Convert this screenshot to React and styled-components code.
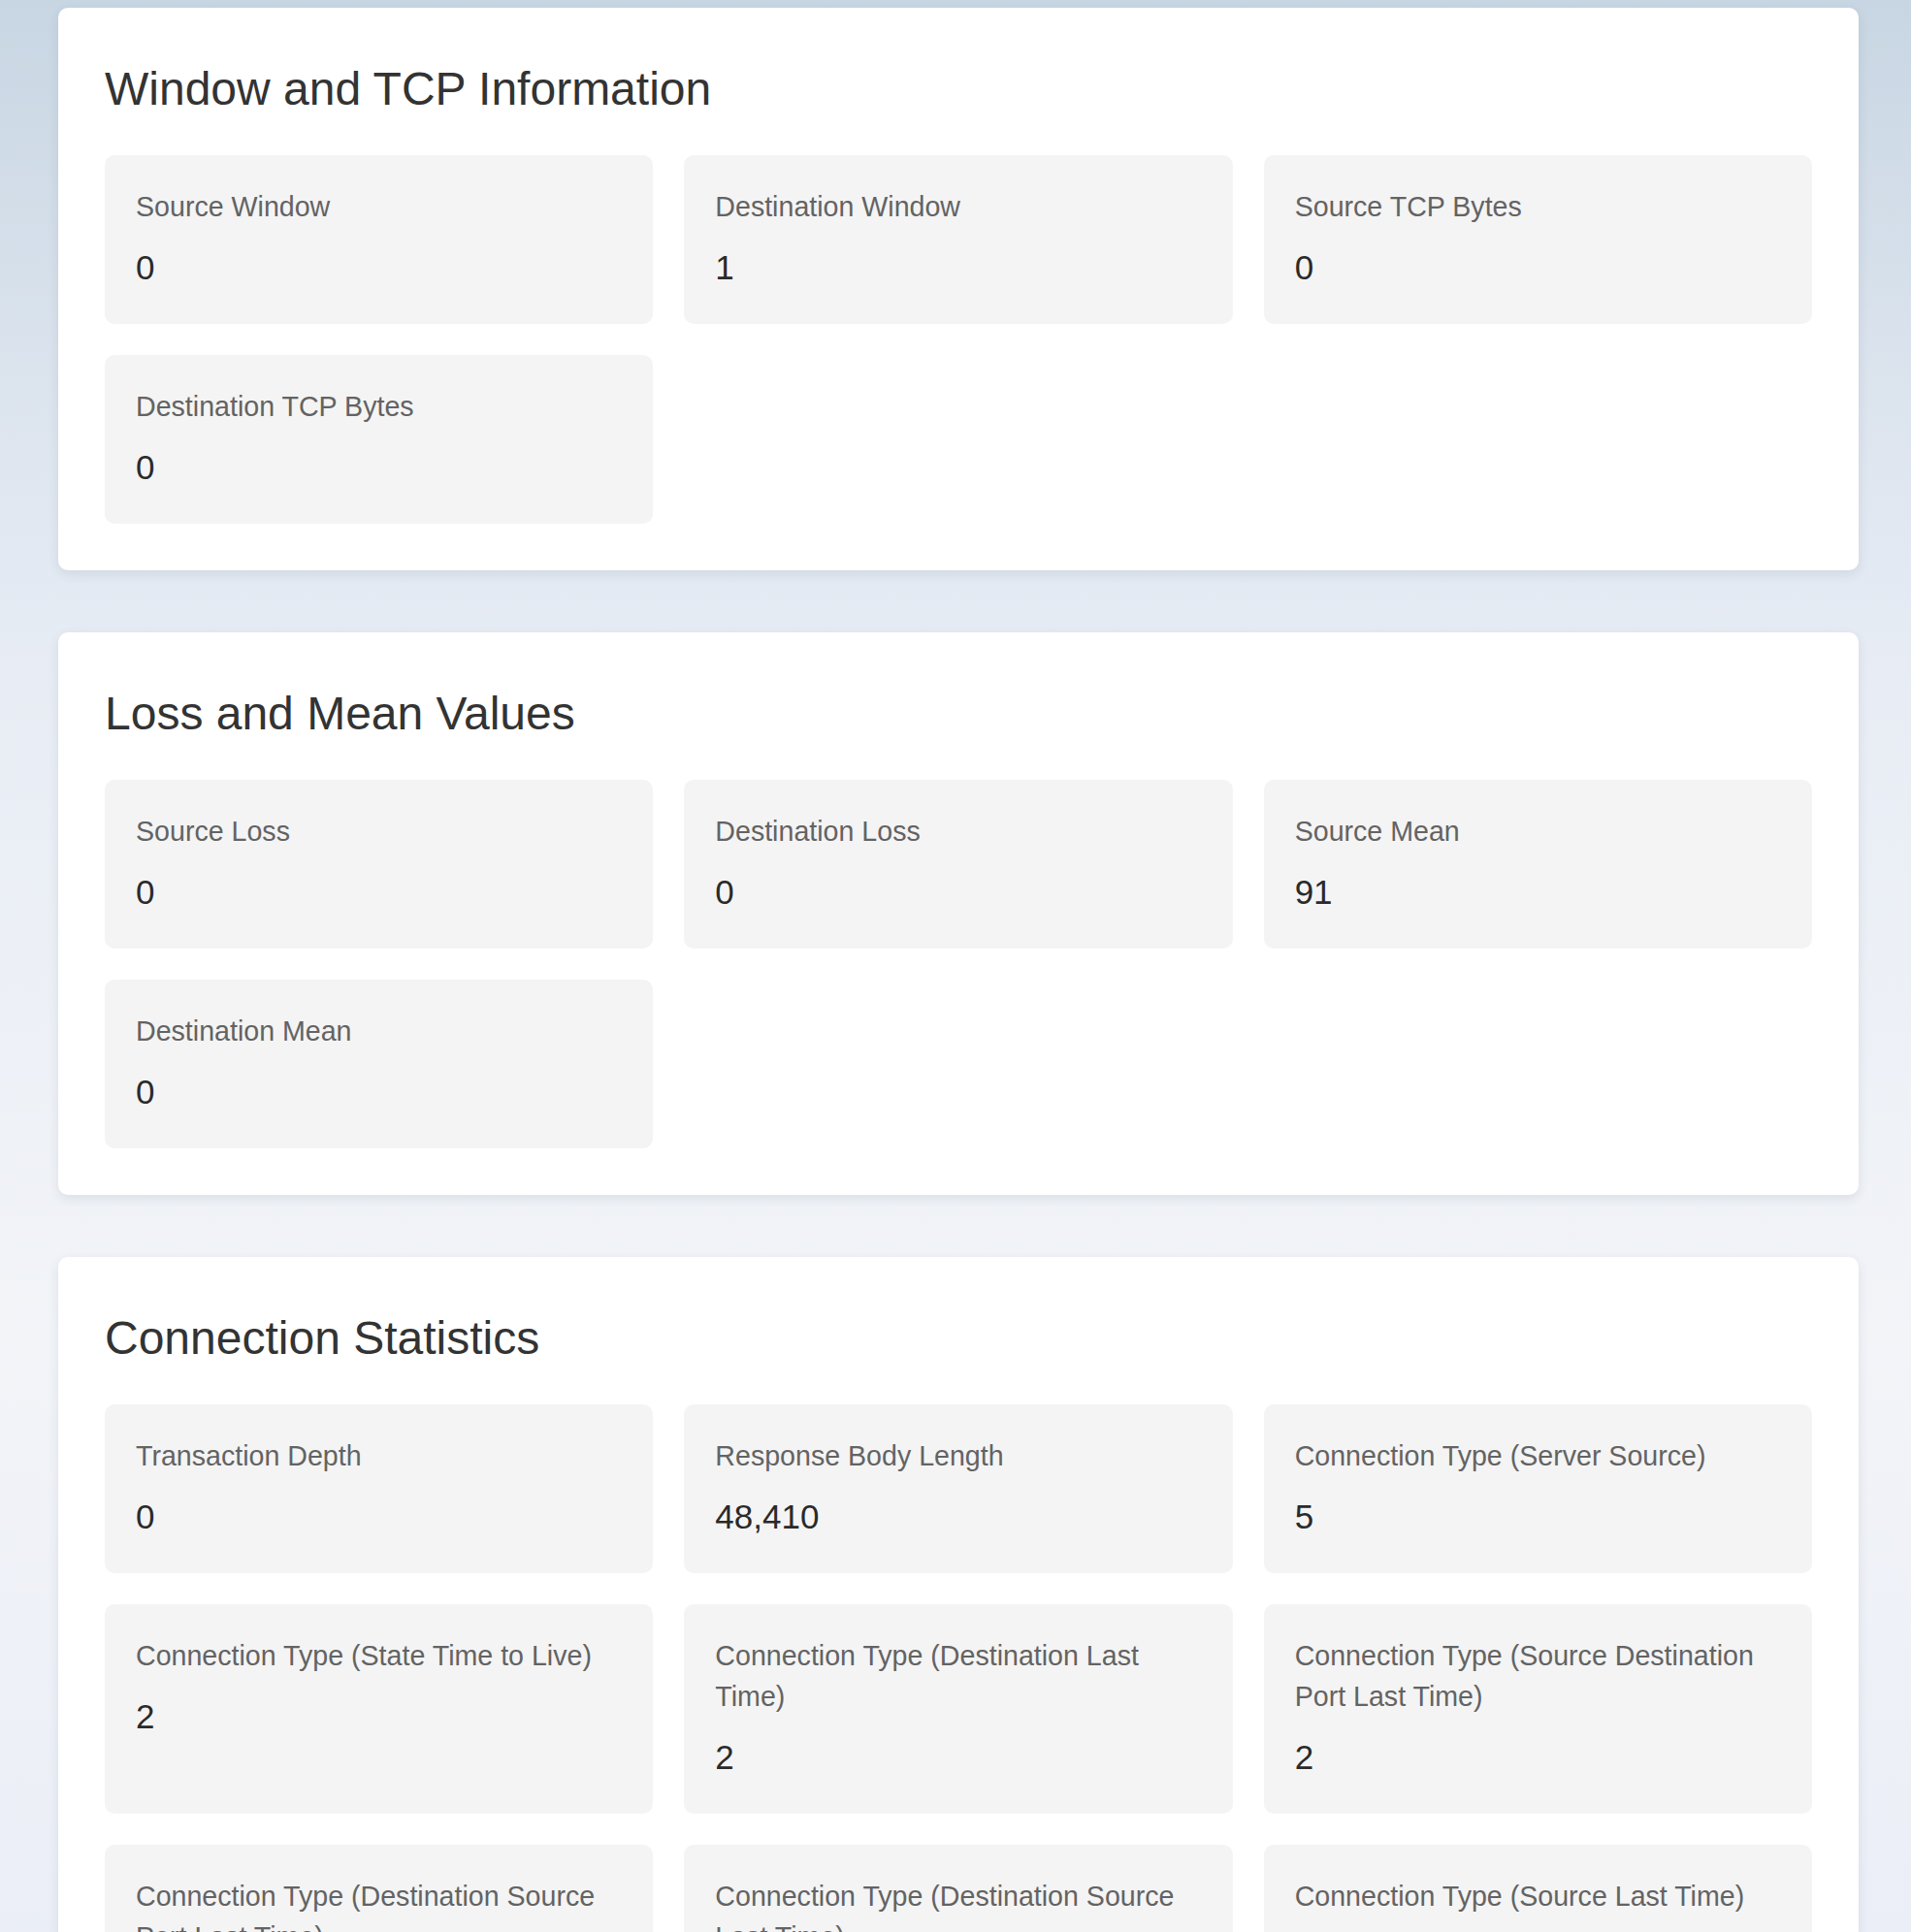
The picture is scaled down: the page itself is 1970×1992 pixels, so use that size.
import React from "react";
import styled, { createGlobalStyle } from "styled-components";

const sections = [
    {
        title: "Window and TCP Information",
        stats: [
            { label: "Source Window", value: "0" },
            { label: "Destination Window", value: "1" },
            { label: "Source TCP Bytes", value: "0" },
            { label: "Destination TCP Bytes", value: "0" },
        ],
    },
    {
        title: "Loss and Mean Values",
        stats: [
            { label: "Source Loss", value: "0" },
            { label: "Destination Loss", value: "0" },
            { label: "Source Mean", value: "91" },
            { label: "Destination Mean", value: "0" },
        ],
    },
    {
        title: "Connection Statistics",
        stats: [
            { label: "Transaction Depth", value: "0" },
            { label: "Response Body Length", value: "48,410" },
            { label: "Connection Type (Server Source)", value: "5" },
            { label: "Connection Type (State Time to Live)", value: "2" },
            { label: "Connection Type (Destination Last Time)", value: "2" },
            { label: "Connection Type (Source Destination Port Last Time)", value: "2" },
            { label: "Connection Type (Destination Source Port Last Time)", value: "2" },
            { label: "Connection Type (Destination Source Last Time)", value: "2" },
            { label: "Connection Type (Source Last Time)", value: "2" },
        ],
    },
];

const App = () => {
    return (
        <>
            <GlobalStyle />
            <Page>
                {sections.map((section) => (
                    <Card key={section.title}>
                        <Heading>{section.title}</Heading>
                        <Grid>
                            {section.stats.map((stat) => (
                                <StatBox key={stat.label}>
                                    <Label>{stat.label}</Label>
                                    <Value>{stat.value}</Value>
                                </StatBox>
                            ))}
                        </Grid>
                    </Card>
                ))}
            </Page>
        </>
    );
};

const GlobalStyle = createGlobalStyle`
    html, body {
        margin: 0;
        padding: 0;
    }
    body {
        min-height: 100vh;
        font-family: "Liberation Sans", Arial, sans-serif;
        background: linear-gradient(180deg, #c8d6e3 0%, #dce4ee 18%, #e8edf5 32%, #f2f4f8 62%, #eceff7 85%, #e8ecf6 100%);
    }
`;

const Page = styled.div`
    display: flex;
    flex-direction: column;
    gap: 64px;
    padding: 8px 54px 64px 60px;
`;

const Card = styled.section`
    background: #ffffff;
    border-radius: 10px;
    padding: 48px;
    box-shadow: 0 4px 12px rgba(40, 60, 90, 0.1);
`;

const Heading = styled.h2`
    margin: 0 0 33px;
    font-size: 48px;
    font-weight: 400;
    line-height: 71px;
    color: #333;
`;

const Grid = styled.div`
    display: grid;
    grid-template-columns: repeat(3, 1fr);
    gap: 32px;
`;

const StatBox = styled.div`
    background: #f4f4f4;
    border-radius: 10px;
    padding: 32px;
`;

const Label = styled.div`
    font-size: 28.6px;
    line-height: 42px;
    color: #636363;
    margin-bottom: 16px;
`;

const Value = styled.div`
    font-size: 35px;
    line-height: 52px;
    color: #2a2a2a;
`;

export default App;
